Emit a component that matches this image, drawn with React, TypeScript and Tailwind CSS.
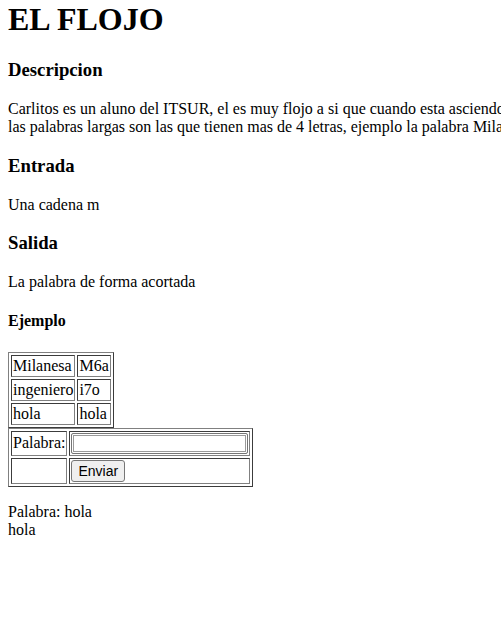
const EJEMPLOS = [
  ['Milanesa', 'M6a'],
  ['ingeniero', 'i7o'],
  ['hola', 'hola'],
];

const tableCls =
  'border-separate border-spacing-[2px] border border-t-[#808080] border-l-[#808080] border-b-[#3c3c3c] border-r-[#3c3c3c]';
const cellCls =
  'p-px border border-t-[#3c3c3c] border-l-[#3c3c3c] border-b-[#808080] border-r-[#808080] align-middle text-left';

export default function App() {
  return (
    <div className="w-[501px] h-[634px] overflow-hidden bg-white px-2 pt-px font-['Liberation_Serif',serif] text-[16px] leading-[normal] text-black">
      <h1 className="mt-0 mb-[21.44px] text-[32px] font-bold">EL FLOJO</h1>

      <h3 className="my-[18.72px] text-[18.72px] font-bold">Descripcion</h3>
      <p className="my-4 whitespace-nowrap">
        Carlitos es un aluno del ITSUR, el es muy flojo a si que cuando esta asciendo sus tareas acorta las palabras largas,
        <br />
        las palabras largas son las que tienen mas de 4 letras, ejemplo la palabra Milanesa se acorta a M6a
      </p>

      <h3 className="my-[18.72px] text-[18.72px] font-bold">Entrada</h3>
      <p className="my-4">Una cadena m</p>

      <h3 className="my-[18.72px] text-[18.72px] font-bold">Salida</h3>
      <p className="my-4">La palabra de forma acortada</p>

      <h4 className="my-[21.28px] text-[16px] font-bold">Ejemplo</h4>

      <table className={tableCls}>
        <tbody>
          {EJEMPLOS.map(([entrada, salida]) => (
            <tr key={entrada}>
              <td className={cellCls}>{entrada}</td>
              <td className={cellCls}>{salida}</td>
            </tr>
          ))}
        </tbody>
      </table>

      {/* Formulario */}
      <form onSubmit={e => e.preventDefault()}>
        <table className={tableCls}>
          <tbody>
            <tr>
              <td className={cellCls}>Palabra:</td>
              <td className={cellCls}>
                <input
                  type="text"
                  className="block w-[177px] h-[21px] px-[2px] border border-[#767676] rounded-[2px] shadow-[inset_0_0_0_1px_#ffffff,inset_0_0_0_2px_#9a9a9a] bg-white font-['Liberation_Sans',sans-serif] text-[13.33px]"
                />
              </td>
            </tr>
            <tr>
              <td className={cellCls}></td>
              <td className={cellCls}>
                <button
                  type="submit"
                  className="block h-[22px] px-[6px] border border-[#767676] rounded-[3px] bg-[#efefef] font-['Liberation_Sans',sans-serif] text-[14px] text-black"
                >
                  Enviar
                </button>
              </td>
            </tr>
          </tbody>
        </table>
      </form>

      <p className="my-4">
        Palabra: hola
        <br />
        hola
      </p>
    </div>
  );
}
